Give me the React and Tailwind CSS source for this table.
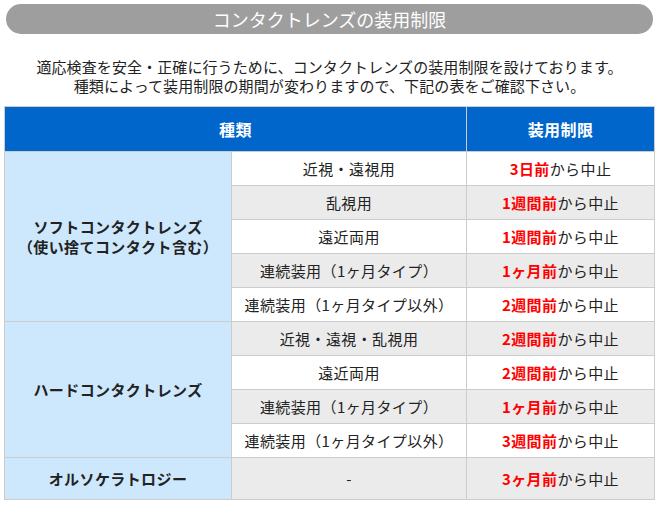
import React from "react";

const font = { fontFamily: '"Noto Sans CJK JP", "Noto Sans", sans-serif' };

function Red({ red }) {
  return (
    <span>
      <span className="font-bold text-[#ff0000]">{red}</span>
      <span>から中止</span>
    </span>
  );
}

export default function App() {
  const td = "border border-[#cccccc] text-center align-middle p-0";
  return (
    <div className="w-[659px] h-[511px] bg-white text-[#222] pt-[4px]" style={font}>
      <div className="mx-[6px] h-[30px] rounded-full bg-[#9e9e9e] text-white text-[18px] leading-[30px] text-center">
        コンタクトレンズの装用制限
      </div>
      <div className="mt-[23px] text-[15px] leading-[19px] text-center text-[#222] tracking-[0.1px]">
        <div>適応検査を安全・正確に行うために、コンタクトレンズの装用制限を設けております。</div>
        <div>種類によって装用制限の期間が変わりますので、下記の表をご確認下さい。</div>
      </div>
      <table className="mt-[11px] ml-[4px] w-[650px] border-collapse table-fixed text-[15px] leading-[20px] tracking-[0.4px]">
        <colgroup>
          <col className="w-[227px]" />
          <col className="w-[235px]" />
          <col className="w-[188px]" />
        </colgroup>
        <tbody>
          <tr className="h-[45px] bg-[#0066cc] text-white font-bold text-[16px]">
            <td colSpan={2} className="border border-[#cccccc] text-center">種類</td>
            <td className="border border-[#cccccc] text-center">装用制限</td>
          </tr>
          <tr className="h-[34px] bg-white">
            <td rowSpan={5} className={`${td} bg-[#cde8fc] font-bold`}>ソフトコンタクトレンズ<br />（使い捨てコンタクト含む）</td>
            <td className={td}>近視・遠視用</td>
            <td className={td}><Red red="3日前" /></td>
          </tr>
          <tr className="h-[34px] bg-[#ebebeb]">
            <td className={td}>乱視用</td>
            <td className={td}><Red red="1週間前" /></td>
          </tr>
          <tr className="h-[34px] bg-white">
            <td className={td}>遠近両用</td>
            <td className={td}><Red red="1週間前" /></td>
          </tr>
          <tr className="h-[34px] bg-[#ebebeb]">
            <td className={td}>連続装用（1ヶ月タイプ）</td>
            <td className={td}><Red red="1ヶ月前" /></td>
          </tr>
          <tr className="h-[34px] bg-white">
            <td className={td}>連続装用（1ヶ月タイプ以外）</td>
            <td className={td}><Red red="2週間前" /></td>
          </tr>
          <tr className="h-[34px] bg-[#ebebeb]">
            <td rowSpan={4} className={`${td} bg-[#cde8fc] font-bold`}>ハードコンタクトレンズ</td>
            <td className={td}>近視・遠視・乱視用</td>
            <td className={td}><Red red="2週間前" /></td>
          </tr>
          <tr className="h-[34px] bg-white">
            <td className={td}>遠近両用</td>
            <td className={td}><Red red="2週間前" /></td>
          </tr>
          <tr className="h-[34px] bg-[#ebebeb]">
            <td className={td}>連続装用（1ヶ月タイプ）</td>
            <td className={td}><Red red="1ヶ月前" /></td>
          </tr>
          <tr className="h-[34px] bg-white">
            <td className={td}>連続装用（1ヶ月タイプ以外）</td>
            <td className={td}><Red red="3週間前" /></td>
          </tr>
          <tr className="h-[42px] bg-[#ebebeb]">
            <td className={`${td} bg-[#cde8fc] font-bold`}>オルソケラトロジー</td>
            <td className={td}>-</td>
            <td className={td}><Red red="3ヶ月前" /></td>
          </tr>
        </tbody>
      </table>
    </div>
  );
}
